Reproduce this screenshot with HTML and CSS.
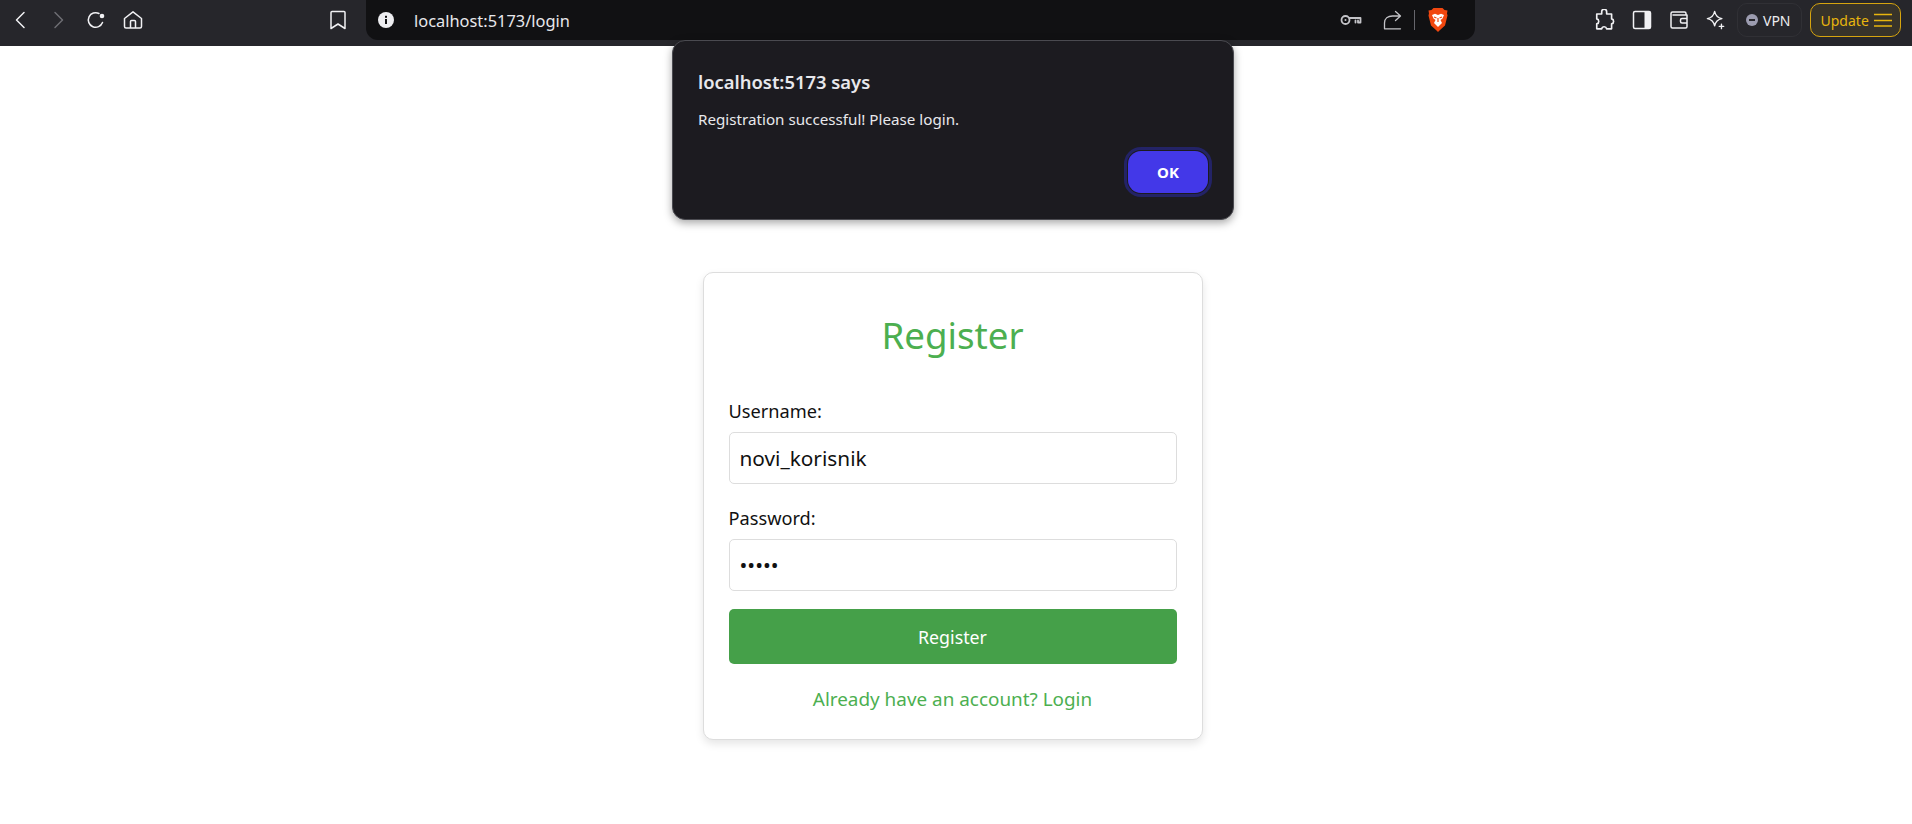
FILE: index.html
```html
<!DOCTYPE html>
<html lang="en">
<head>
<meta charset="utf-8">
<title>Register</title>
<link rel="stylesheet" href="styles.css">
</head>
<body>
<header class="chrome">
  <nav class="nav-icons">
    <svg class="ico ico-back" viewBox="0 0 20 20"><path d="M13 2.500 5.500 10l7.500 7.500"/></svg>
    <svg class="ico ico-fwd" viewBox="0 0 20 20"><path d="M7 2.500 14.500 10 7 17.500"/></svg>
    <svg class="ico ico-reload" viewBox="0 0 20 20"><path d="M16.500 12.500a7.300 7.300 0 1 1-3.500-9"/><circle class="fill" cx="16" cy="6" r="2.300"/></svg>
    <svg class="ico ico-home" viewBox="0 0 20 20"><path d="M1.500 8.500 10 1.800l8.500 6.700v8a1.500 1.500 0 0 1-1.500 1.500H3a1.500 1.500 0 0 1-1.500-1.500zM7.500 18v-6.500a1 1 0 0 1 1-1h3a1 1 0 0 1 1 1V18"/></svg>
  </nav>
  <svg class="ico ico-bookmark" viewBox="0 0 20 20"><path d="M4 1.500h12a1 1 0 0 1 1 1v16L10 14l-7 4.500v-16a1 1 0 0 1 1-1z"/></svg>
  <div class="urlbar">
    <svg class="info" viewBox="0 0 16 16"><circle cx="8" cy="8" r="8"/><rect class="cut" x="7" y="7" width="2" height="5"/><rect class="cut" x="7" y="3.800" width="2" height="2"/></svg>
    <span class="url">localhost:5173/login</span>
    <span class="url-right">
      <svg class="ico ico-key" viewBox="0 0 22 14"><circle cx="5.500" cy="7" r="4"/><circle cx="5.500" cy="7" r="1" class="keyhole"/><path d="M9.500 5h11v4.500h-2.500V7.500M15.500 7.500v2"/></svg>
      <svg class="ico ico-share" viewBox="0 0 20 20"><path d="M1.500 18.500V13C1.500 8.500 5 6 9.500 6H17M12.500 1.500 17.500 6l-5 4.500M1.500 18.800h16"/></svg>
      <span class="sep"></span>
      <svg class="brave" viewBox="0 0 20 24"><path class="shield" d="M5.500 0h9l2 2 3 .500-.500 3 .500 2-2.500 10L12 22l-2 2-2-2-5-4.500L.500 7.500l.500-2-.500-3 3-.500z"/><path class="lion" d="M4 7l3-1.300L10 7l3-1.300L16 7l-1.500 3.500-2 1.500 1.500 3-4 4-4-4 1.500-3-2-1.500z"/><path class="lion-cut" d="M6 9l2.500 1M14 9l-2.500 1M10 10v4"/></svg>
    </span>
  </div>
  <div class="tools">
    <svg class="ico ico-puzzle" viewBox="0 0 20 20"><path d="M7 2.500a2.200 2.200 0 0 1 4.500 0V4.500h4.500V9a2.300 2.300 0 0 1 0 4.500V18H11.500a2.300 2.300 0 0 0-4.500 0H2.500v-4.500a2.300 2.300 0 0 0 0-4.500V4.500H7z"/></svg>
    <svg class="ico ico-panel" viewBox="0 0 20 20"><rect x="1.500" y="1.500" width="17" height="17" rx="1.500"/><rect class="fill" x="12.500" y="2" width="6" height="16"/></svg>
    <svg class="ico ico-wallet" viewBox="0 0 20 20"><path d="M17 5V3.500a1.500 1.500 0 0 0-1.500-1.500H3.500A1.500 1.500 0 0 0 2 3.500v13A1.500 1.500 0 0 0 3.500 18h13a1.500 1.500 0 0 0 1.500-1.500V5H4M18 8.500h-5a1.500 1.500 0 0 0-1.500 1.500v1.500A1.500 1.500 0 0 0 13 13h5"/></svg>
    <svg class="ico ico-leo" viewBox="0 0 22 22"><path d="M9.500 1.500c1 5 3 7 8 8-5 1-7 3-8 8-1-5-3-7-8-8 5-1 7-3 8-8z"/><path d="M17 15.500v5M14.500 18h5"/></svg>
    <span class="vpn"><i class="vpn-dot"></i>VPN</span>
    <span class="update">Update
      <svg class="burger" viewBox="0 0 18 14"><path d="M0 1.500h18M0 7.500h18M0 13h18"/></svg>
    </span>
  </div>
</header>

<main class="page">
  <section class="card">
    <h2 class="title">Register</h2>
    <form class="form">
      <div class="field">
        <label class="label" for="u">Username:</label>
        <input class="input" id="u" type="text" value="novi_korisnik">
      </div>
      <div class="field">
        <label class="label" for="p">Password:</label>
        <input class="input" id="p" type="password" value="12345">
      </div>
      <button class="submit" type="button">Register</button>
    </form>
    <p class="switch">Already have an account? Login</p>
  </section>
</main>

<div class="dialog" role="alertdialog">
  <div class="dialog-title">localhost:5173 says</div>
  <div class="dialog-msg">Registration successful! Please login.</div>
  <div class="dialog-actions"><button class="ok" type="button">OK</button></div>
</div>
</body>
</html>
```
FILE: styles.css
```css
* { box-sizing: border-box; }
html, body { margin: 0; height: 100%; }
body { background: #fff; font-family: "Noto Sans", "Open Sans", sans-serif; overflow: hidden; position: relative; }

.chrome { height: 46px; background: #26262b; display: flex; align-items: flex-start; color: #f1f1f4; }
.ico { fill: none; stroke: #f1f1f4; stroke-width: 1.5; stroke-linecap: round; stroke-linejoin: round; flex: none; }
.ico .fill { fill: #f1f1f4; stroke: none; }

.nav-icons { display: flex; align-items: center; height: 40px; padding-left: 11px; }
.ico-back { width: 20px; height: 20px; }
.ico-fwd { width: 20px; height: 20px; margin-left: 17px; stroke: #6d6d73; }
.ico-reload { width: 20px; height: 20px; margin-left: 18px; }
.ico-home { width: 20px; height: 20px; margin-left: 17px; }
.ico-bookmark { width: 20px; height: 20px; margin: 10px 0 0 185px; }

.urlbar { width: 1109px; height: 40px; margin-left: 18px; background: #111113; border-radius: 0 0 12px 12px; display: flex; align-items: center; padding: 0 27px 0 12px; }
.info { width: 16px; height: 16px; flex: none; fill: #ededf0; }
.info .cut { fill: #111113; }
.url { margin: 0 0 0 20px; font-size: 16.400px; color: #e8e8ec; }
.url-right { margin-left: auto; display: flex; align-items: center; }
.ico-key { width: 22px; height: 14px; stroke: #c4c4c8; stroke-width: 1.8; }
.ico-key .keyhole { fill: #c4c4c8; stroke: none; }
.ico-share { width: 20px; height: 20px; margin-left: 21px; stroke: #c4c4c8; stroke-width: 1.3; }
.sep { width: 1px; height: 20px; background: #66666c; margin-left: 11px; }
.brave { width: 20px; height: 24px; margin-left: 13px; }
.shield { fill: #f1470f; }
.lion { fill: #fff; }
.lion-cut { fill: none; stroke: #f1470f; stroke-width: 1.200; }

.tools { display: flex; align-items: center; height: 40px; margin-left: 119px; }
.ico-puzzle { width: 22px; height: 22px; }
.ico-panel { width: 20px; height: 20px; margin-left: 16px; }
.ico-wallet { width: 20px; height: 20px; margin-left: 17px; }
.ico-leo { width: 20px; height: 20px; margin-left: 17px; }
.vpn { display: flex; align-items: center; gap: 5px; height: 34px; padding: 0 10px 0 8px; margin-left: 11px; border: 1px solid #303035; border-radius: 10px; font-size: 14px; color: #ededf0; }
.vpn-dot { width: 12px; height: 12px; border-radius: 50%; background: #9c9cb0; position: relative; }
.vpn-dot::after { content: ""; position: absolute; left: 3px; right: 3px; top: 5px; height: 2px; background: #26262b; }
.update { display: flex; align-items: center; gap: 5px; height: 34px; width: 91px; padding-left: 10px; margin-left: 8px; border: 1.5px solid #d6a40f; border-radius: 10px; background: #37332a; color: #e8b50e; font-size: 14px; }
.burger { width: 18px; height: 14px; fill: none; stroke: #e8b50e; stroke-width: 1.5; }

.page { display: flex; justify-content: center; padding: 226px 7px 0 0; }
.card { width: 500px; background: #fff; border: 1px solid #ddd; border-radius: 10px; box-shadow: 0 4px 8px rgba(0,0,0,.1); padding: 32px 25px 28px; }
.title { margin: 0 0 33px; text-align: center; font-size: 36.700px; line-height: 60px; font-weight: 400; color: #4caf50; }
.form { display: flex; flex-direction: column; }
.field { display: flex; flex-direction: column; margin-bottom: 15px; }
.field + .field { margin-top: 6px; }
.label { font-size: 18.200px; line-height: 24px; padding-top: 1px; margin-bottom: 9px; color: #111; }
.input { height: 52px; border: 1px solid #ddd; border-radius: 5px; padding: 0 10px; font: inherit; font-size: 20.800px; color: #111; outline: none; }
.submit { height: 55px; margin-top: 3px; border: 0; border-radius: 5px; padding-top: 2px; background: #45a049; color: #fff; font: inherit; font-size: 17.800px; }
.switch { margin: 23px 0 0; text-align: center; font-size: 18.900px; line-height: 24px; color: #4caf50; }

.dialog { position: absolute; left: 672px; top: 40px; width: 562px; height: 180px; background: #1c1b20; border: 1px solid #4a4a50; border-radius: 13px; box-shadow: 0 3px 8px rgba(0,0,0,.35); padding: 29px 25px 0 25px; color: #e8e8ec; display: flex; flex-direction: column; }
.dialog-title { font-size: 18.400px; font-weight: 600; line-height: 24px; }
.dialog-msg { margin-top: 15px; font-size: 15.200px; line-height: 20px; }
.dialog-actions { margin-top: auto; padding-bottom: 26px; display: flex; justify-content: flex-end; }
.ok { width: 80px; height: 42px; border: 0; border-radius: 13px; background: #4338e8; color: #fff; font: inherit; font-size: 15px; font-weight: 700; outline: 3px solid #232366; outline-offset: 1px; }
```
